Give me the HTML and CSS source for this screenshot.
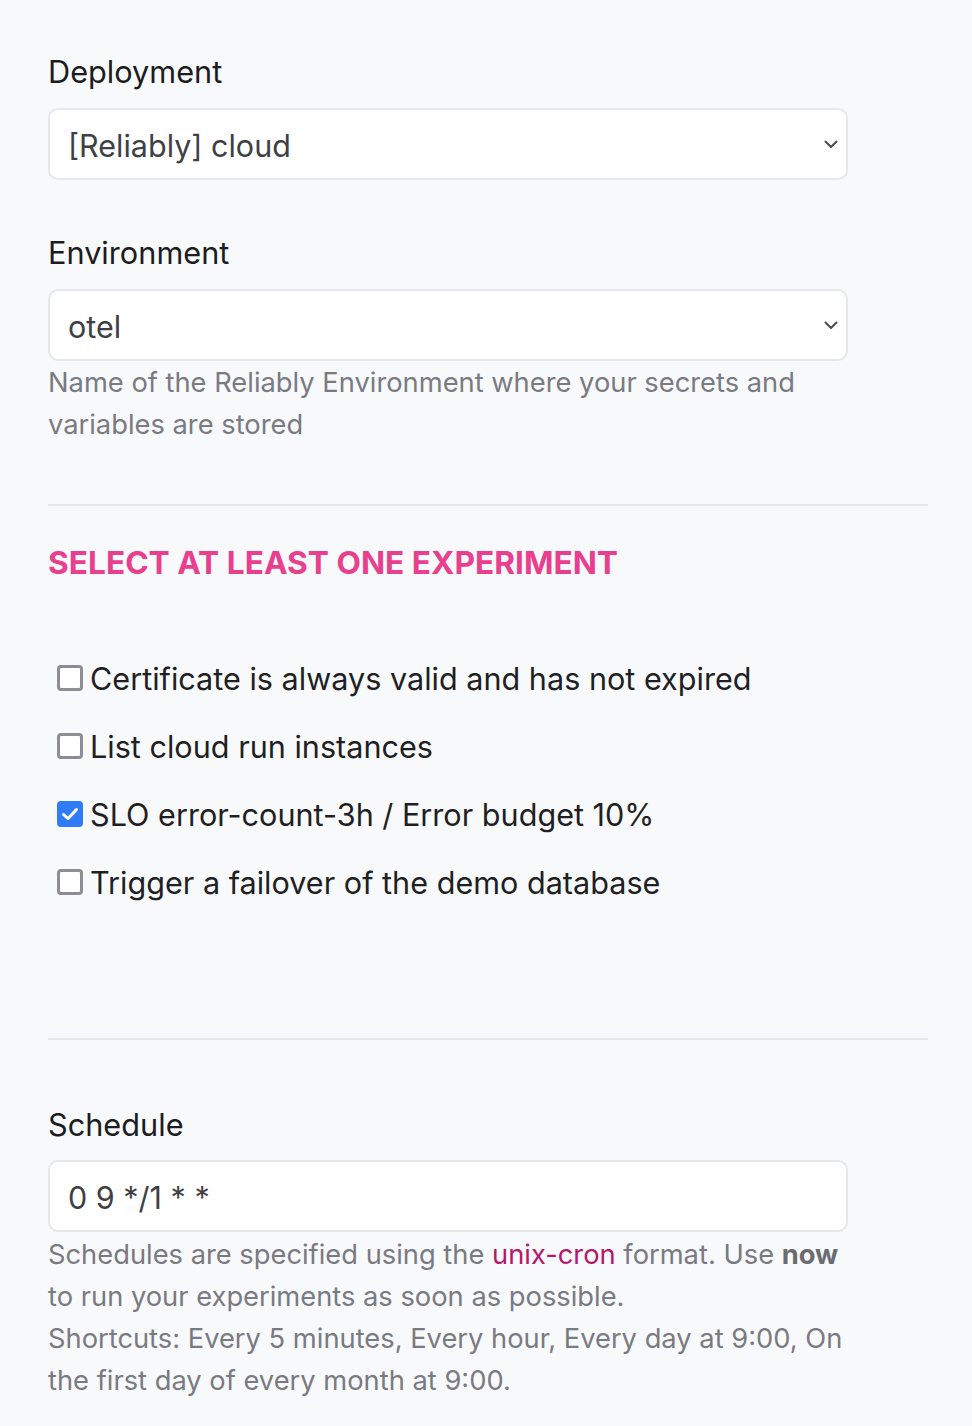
FILE: index.html
```html
<!DOCTYPE html>
<html lang="en">
<head>
<meta charset="utf-8">
<title>Schedule experiments</title>
<link rel="stylesheet" href="styles.css">
</head>
<body>
<form class="form">
  <div class="field first">
    <label class="label" for="deployment">Deployment</label>
    <div class="select">
      <span class="select-value">[Reliably] cloud</span>
      <svg class="chevron" width="14" height="9" viewBox="0 0 14 9"><polyline points="1.5,1.5 7,7 12.5,1.5" fill="none" stroke="#4b4b50" stroke-width="2" stroke-linecap="round" stroke-linejoin="round"/></svg>
    </div>
  </div>
  <div class="field second">
    <label class="label" for="environment">Environment</label>
    <div class="select">
      <span class="select-value">otel</span>
      <svg class="chevron" width="14" height="9" viewBox="0 0 14 9"><polyline points="1.5,1.5 7,7 12.5,1.5" fill="none" stroke="#4b4b50" stroke-width="2" stroke-linecap="round" stroke-linejoin="round"/></svg>
    </div>
    <p class="help">Name of the Reliably Environment where your secrets and variables are stored</p>
  </div>
  <hr class="divider divider-1">
  <h3 class="section-title">SELECT AT LEAST ONE EXPERIMENT</h3>
  <ul class="checks">
    <li class="check"><span class="box"></span><span class="check-label">Certificate is always valid and has not expired</span></li>
    <li class="check"><span class="box"></span><span class="check-label">List cloud run instances</span></li>
    <li class="check"><span class="box checked"><svg width="18" height="14" viewBox="0 0 18 14"><polyline points="2.5,7.5 7,11.5 15.5,2.5" fill="none" stroke="#fff" stroke-width="3" stroke-linecap="round" stroke-linejoin="round"/></svg></span><span class="check-label">SLO error-count-3h / Error budget 10%</span></li>
    <li class="check"><span class="box"></span><span class="check-label">Trigger a failover of the demo database</span></li>
  </ul>
  <hr class="divider divider-2">
  <div class="field third">
    <label class="label" for="schedule">Schedule</label>
    <div class="input">0 9 */1 * *</div>
    <p class="help">Schedules are specified using the <a class="link">unix-cron</a> format. Use <strong>now</strong> to run your experiments as soon as possible.<br>Shortcuts: Every 5 minutes, Every hour, Every day at 9:00, On the first day of every month at 9:00.</p>
  </div>
</form>
</body>
</html>
```
FILE: styles.css
```css
html, body {
  margin: 0;
  padding: 0;
  background: #f8f9fb;
}
body {
  font-family: Inter, "Noto Sans", "Liberation Sans", sans-serif;
  color: #1f1f24;
}
.form {
  width: 880px;
  padding: 52px 0 0 48px;
}
.field {
  display: flex;
  flex-direction: column;
}
.second { margin-top: 53px; }
.label {
  font-size: 30.7px;
  line-height: 40px;
  margin-bottom: 16px;
  color: #1c1c21;
}
.select, .input {
  box-sizing: border-box;
  width: 800px;
  height: 72px;
  background: #fff;
  border: 2px solid #e6e7eb;
  border-radius: 10px;
  display: flex;
  align-items: center;
  padding: 3px 8px 0 18px;
  font-size: 30.5px;
  color: #3f3f46;
}
.select-value { flex: 1; }
.chevron { margin-bottom: 3px; }
.help {
  width: 800px;
  margin: 1px 0 0;
  font-size: 27.3px;
  line-height: 42px;
  color: #7a7a82;
}
.help strong { color: #6b6b72; font-weight: 700; }
.link { color: #b5176b; text-decoration: none; }
.divider {
  border: 0;
  height: 2px;
  background: #e5e7ee;
  margin: 0;
  width: 880px;
}
.divider-1 { margin-top: 58px; }
.section-title {
  margin: 37px 0 0;
  font-size: 31.7px;
  line-height: 40px;
  font-weight: 700;
  color: #e8408e;
}
.checks {
  list-style: none;
  margin: 61px 0 0;
  padding: 0;
}
.check {
  height: 68px;
  display: flex;
  align-items: center;
  gap: 7px;
  padding-left: 9px;
}
.box {
  box-sizing: border-box;
  width: 26px;
  height: 26px;
  border: 3px solid #8e8d94;
  border-radius: 4px;
  background: #fff;
  display: flex;
  align-items: center;
  justify-content: center;
}
.box.checked {
  background: #2f7cf6;
  border-color: #2f7cf6;
}
.check-label {
  font-size: 30.6px;
  color: #1f1f24;
}
.divider-2 { margin-top: 122px; }
.third { margin-top: 65px; }
.third .label { margin-bottom: 15px; }
.third .help { margin-top: 2px; }
```
